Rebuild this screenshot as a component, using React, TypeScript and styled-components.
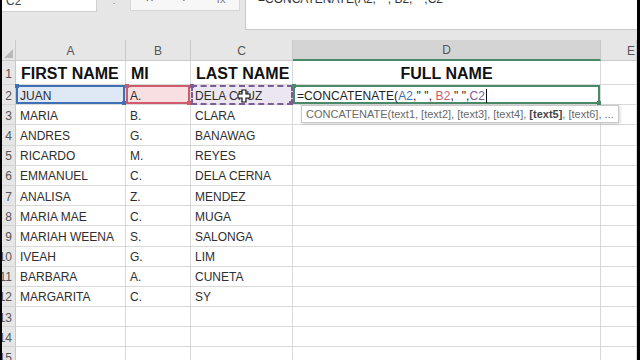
import React from 'react';
import styled, { createGlobalStyle, css } from 'styled-components';

const GlobalStyle = createGlobalStyle`
  html, body {
    margin: 0;
    padding: 0;
    background: #000;
  }
  body {
    font-family: "Liberation Sans", Arial, sans-serif;
  }
`;

const Frame = styled.div`
  width: 640px;
  height: 360px;
  display: flex;
  padding: 0 3px 0 2px;
  box-sizing: border-box;
  background: #000;
`;

const Screen = styled.div`
  flex: 1;
  display: flex;
  flex-direction: column;
  background: #e8e8e8;
  overflow: hidden;
`;

const TopBar = styled.div`
  height: 40px;
  flex: none;
  display: flex;
  align-items: flex-start;
  overflow: hidden;
  background: #e6e6e6;
`;

const NameBox = styled.div`
  width: 95px;
  height: 12px;
  background: #fff;
  border-right: 1px solid #cfcfcf;
  border-bottom: 1px solid #cfcfcf;
  overflow: hidden;
  display: flex;
  align-items: flex-end;
  padding-left: 4px;
  box-sizing: border-box;
  font-size: 12px;
  color: #444;
  line-height: 1;
  span {
    margin-bottom: 4px;
  }
`;

const Dots = styled.div`
  width: 33px;
  text-align: center;
  font-size: 10px;
  color: #888;
  line-height: 1;
  margin-top: -5px;
`;

const FnBox = styled.div`
  width: 110px;
  height: 11px;
  background: #f7f7f7;
  border: 1px solid #d6d6d6;
  border-top: none;
  display: flex;
  justify-content: space-around;
  align-items: flex-end;
  overflow: hidden;
  color: #777;
  font-size: 11px;
  box-sizing: border-box;
  span {
    margin-bottom: 5px;
  }
`;

const FormulaBox = styled.div`
  flex: 1;
  margin-left: 5px;
  height: 30px;
  background: #fff;
  border-left: 1px solid #c9c9c9;
  border-bottom: 1px solid #c9c9c9;
  box-sizing: border-box;
  padding-left: 12px;
  font-size: 12px;
  color: #333;
  line-height: 12px;
  overflow: hidden;
  span {
    display: block;
    margin-top: -7px;
    white-space: pre;
  }
`;

const Sheet = styled.div`
  flex: 1;
  display: grid;
  grid-template-columns: 14px 110px 65px 102px 308px 1fr;
  grid-template-rows: 21px 24px repeat(14, 20.2px);
  background: #fff;
  overflow: hidden;
`;

const Corner = styled.div`
  background: #e6e6e6;
  border-right: 1px solid #cacaca;
  border-bottom: 1px solid #cacaca;
  position: relative;
  &::after {
    content: '';
    position: absolute;
    right: 2px;
    bottom: 2px;
    border-left: 9px solid transparent;
    border-bottom: 9px solid #b9b9b9;
  }
`;

const ColHead = styled.div<{ $active?: boolean; $last?: boolean }>`
  background: ${(p) => (p.$active ? '#d4d4d4' : '#e6e6e6')};
  border-right: 1px solid #c9c9c9;
  border-bottom: ${(p) => (p.$active ? '2px solid #4a8a68' : '1px solid #cacaca')};
  color: #555;
  font-size: 12px;
  display: flex;
  align-items: center;
  justify-content: ${(p) => (p.$last ? 'flex-end' : 'center')};
  padding-right: ${(p) => (p.$last ? '1px' : '0')};
  padding-top: 1px;
  box-sizing: border-box;
`;

const RowHead = styled.div`
  background: #e6e6e6;
  border-right: 1px solid #c9c9c9;
  border-bottom: 1px solid #d4d4d4;
  color: #555;
  font-size: 12px;
  display: flex;
  align-items: center;
  justify-content: flex-end;
  padding: 2px 3px 0 0;
  box-sizing: border-box;
  overflow: hidden;
  white-space: nowrap;
`;

type Ref = 'blue' | 'red' | 'purple' | 'edit';

const refStyles: Record<Ref, ReturnType<typeof css>> = {
  blue: css`
    background: #dfe8f5;
    box-shadow: inset 0 0 0 2px #3f6fb4;
  `,
  red: css`
    background: #f8dfe2;
    box-shadow: inset 0 0 0 2px #cf5a6b;
  `,
  purple: css`
    background: #ece6f1;
    outline: 2px dashed #7a5c96;
    outline-offset: -2px;
  `,
  edit: css`
    box-shadow: inset 0 0 0 2px #4a8a68;
  `,
};

const handleColor: Record<Ref, string> = {
  blue: '#3f6fb4',
  red: '#cf5a6b',
  purple: '#7a5c96',
  edit: '#4a8a68',
};

const Cell = styled.div<{ $bold?: boolean; $ref?: Ref }>`
  position: relative;
  border-right: 1px solid #d9d9d9;
  border-bottom: 1px solid #d9d9d9;
  box-sizing: border-box;
  display: flex;
  align-items: center;
  padding-left: ${(p) => (p.$bold ? '5px' : '4px')};
  padding-top: 2px;
  font-size: ${(p) => (p.$bold ? '16px' : '12px')};
  font-weight: ${(p) => (p.$bold ? 700 : 400)};
  color: ${(p) => (p.$bold ? '#111' : '#2e2e2e')};
  white-space: nowrap;
  ${(p) => p.$ref && refStyles[p.$ref]}
  ${(p) =>
    p.$ref &&
    css`
      &::before,
      &::after {
        content: '';
        position: absolute;
        width: 4px;
        height: 4px;
        background: ${handleColor[p.$ref]};
      }
      &::before {
        left: -1px;
        top: -1px;
      }
      &::after {
        right: -1px;
        bottom: -1px;
      }
    `}
`;

const Centered = styled(Cell)`
  justify-content: center;
  padding-left: 0;
`;

const Formula = styled.span`
  color: #222;
  display: flex;
  align-items: center;
  white-space: pre;
  letter-spacing: 0.1px;
`;

const RefText = styled.span<{ $c: string }>`
  color: ${(p) => p.$c};
`;

const Caret = styled.span`
  display: inline-block;
  width: 1px;
  height: 14px;
  background: #111;
  margin-left: 1px;
`;

const Tip = styled.div`
  position: absolute;
  top: calc(100% + 1px);
  left: 8px;
  height: 16px;
  padding: 0 4px;
  display: flex;
  align-items: center;
  background: #fff;
  border: 1px solid #c8c8c8;
  box-shadow: 1px 1px 3px rgba(0, 0, 0, 0.18);
  font-size: 11px;
  font-weight: 400;
  color: #6a6a6a;
  white-space: pre;
  z-index: 2;
  b {
    color: #444;
  }
`;

const Cursor = styled.svg`
  position: absolute;
  left: 46px;
  top: 4px;
  z-index: 3;
`;

const rows: [string, string, string][] = [
  ['MARIA', 'B.', 'CLARA'],
  ['ANDRES', 'G.', 'BANAWAG'],
  ['RICARDO', 'M.', 'REYES'],
  ['EMMANUEL', 'C.', 'DELA CERNA'],
  ['ANALISA', 'Z.', 'MENDEZ'],
  ['MARIA MAE', 'C.', 'MUGA'],
  ['MARIAH WEENA', 'S.', 'SALONGA'],
  ['IVEAH', 'G.', 'LIM'],
  ['BARBARA', 'A.', 'CUNETA'],
  ['MARGARITA', 'C.', 'SY'],
  ['', '', ''],
  ['', '', ''],
  ['', '', ''],
];

export default function App() {
  return (
    <>
      <GlobalStyle />
      <Frame>
        <Screen>
          <TopBar>
            <NameBox>
              <span>C2</span>
            </NameBox>
            <Dots>⋮</Dots>
            <FnBox>
              <span>✕</span>
              <span>✓</span>
              <span>fx</span>
            </FnBox>
            <FormulaBox>
              <span>{'=CONCATENATE(A2," ", B2," ",C2'}</span>
            </FormulaBox>
          </TopBar>
          <Sheet>
            <Corner />
            <ColHead>A</ColHead>
            <ColHead>B</ColHead>
            <ColHead>C</ColHead>
            <ColHead $active>D</ColHead>
            <ColHead $last>E</ColHead>

            <RowHead>1</RowHead>
            <Cell $bold>FIRST NAME</Cell>
            <Cell $bold>MI</Cell>
            <Cell $bold>LAST NAME</Cell>
            <Centered $bold>FULL NAME</Centered>
            <Cell />

            <RowHead>2</RowHead>
            <Cell $ref="blue">JUAN</Cell>
            <Cell $ref="red">A.</Cell>
            <Cell $ref="purple">
              DELA CRUZ
              <Cursor width="14" height="14" viewBox="0 0 14 14">
                <path
                  d="M5 1h4v4h4v4H9v4H5V9H1V5h4z"
                  fill="#fff"
                  stroke="#111"
                  strokeWidth="1.2"
                />
              </Cursor>
            </Cell>
            <Cell $ref="edit">
              <Formula>
                {'=CONCATENATE('}
                <RefText $c="#3f6fb4">A2</RefText>
                {'," ", '}
                <RefText $c="#cf5a6b">B2</RefText>
                {'," ",'}
                <RefText $c="#7a5c96">C2</RefText>
                <Caret />
              </Formula>
              <Tip>
                {'CONCATENATE(text1, [text2], [text3], [text4], '}
                <b>[text5]</b>
                {', [text6], ...'}
              </Tip>
            </Cell>
            <Cell />

            {rows.map((r, i) => (
              <React.Fragment key={i}>
                <RowHead>{i + 3}</RowHead>
                <Cell>{r[0]}</Cell>
                <Cell>{r[1]}</Cell>
                <Cell>{r[2]}</Cell>
                <Cell />
                <Cell />
              </React.Fragment>
            ))}
          </Sheet>
        </Screen>
      </Frame>
    </>
  );
}
